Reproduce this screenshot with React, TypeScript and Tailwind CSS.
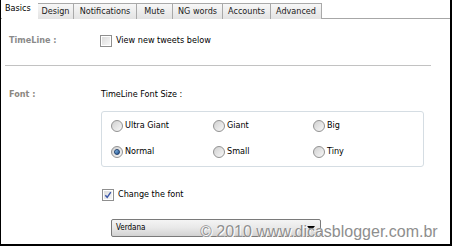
import React from "react";

const font = { fontFamily: '"DejaVu Sans Condensed", "Liberation Sans", Arial, sans-serif' };

function Tab({ label, active, w }: { label: string; active?: boolean; w: string }) {
  if (active) {
    return (
      <div className={`${w} h-[19px] bg-white relative z-10 flex items-start pl-[3px] pt-[2px] text-[9px] text-black`}>
        {label}
      </div>
    );
  }
  return (
    <div
      className={`${w} h-[16px] mt-[3px] border border-[#a9a9a9] border-b-0 bg-gradient-to-b from-[#f7f7f7] to-[#e3e3e3] flex items-center justify-center text-[9px] text-[#1a1a1a] -ml-px first:ml-0`}
    >
      {label}
    </div>
  );
}

function Checkbox({ checked }: { checked?: boolean }) {
  return (
    <div className="w-[12px] h-[12px] border border-[#8f8f8f] bg-white p-[1px] shrink-0">
      <div className="w-full h-full bg-gradient-to-br from-[#dcdcdc] to-[#f6f6f6] relative">
        {checked && (
          <svg viewBox="0 0 8 8" className="absolute inset-0 w-full h-full">
            <path d="M1.3 4.2 L3.2 6.3 L6.8 1.2" fill="none" stroke="#3b56a8" strokeWidth="1.4" />
          </svg>
        )}
      </div>
    </div>
  );
}

function Radio({ checked, label }: { checked?: boolean; label: string }) {
  return (
    <div className="flex items-center gap-[2px] text-[9px] text-black h-[12px]">
      <div className="w-[12px] h-[12px] rounded-full border border-[#929292] bg-gradient-to-br from-[#d0d0d0] to-[#f8f8f8] flex items-center justify-center shrink-0">
        {checked && (
          <div className="w-[6px] h-[6px] rounded-full bg-gradient-to-br from-[#8fc3ef] to-[#1f4f8a] border border-[#1d3f6e]" />
        )}
      </div>
      <span>{label}</span>
    </div>
  );
}

export default function App() {
  return (
    <div
      className="w-[452px] h-[246px] bg-white relative border-l border-r-2 border-b-2 border-black overflow-hidden"
      style={font}
    >
      {/* tab strip */}
      <div className="flex h-[19px] border-b border-[#a7a7a7] pl-px">
        <Tab label="Basics" active w="w-[36px]" />
        <Tab label="Design" w="w-[37px]" />
        <Tab label="Notifications" w="w-[64px]" />
        <Tab label="Mute" w="w-[37px]" />
        <Tab label="NG words" w="w-[51px]" />
        <Tab label="Accounts" w="w-[49px]" />
        <Tab label="Advanced" w="w-[52px]" />
      </div>

      {/* TimeLine row */}
      <div className="flex items-center mt-[16px] h-[12px]">
        <div className="w-[99px] pl-[8px] text-[9px] font-bold text-[#8a8a8a]">TimeLine :</div>
        <Checkbox />
        <span className="ml-[4px] text-[9px] text-black">View new tweets below</span>
      </div>

      {/* separator */}
      <div className="ml-[4px] mt-[18px] w-[426px] h-px bg-[#c2c2c2]" />

      {/* Font row */}
      <div className="flex items-center mt-[23px] h-[12px]">
        <div className="w-[100px] pl-[8px] text-[9px] font-bold text-[#8c8780]">Font :</div>
        <span className="text-[9px] text-black">TimeLine Font Size :</span>
      </div>

      {/* group box */}
      <div className="ml-[100px] mt-[10px] w-[323px] h-[56px] border border-[#d5dde3] rounded-[3px] grid grid-cols-[102px_100px_1fr] grid-rows-[12px_12px] gap-y-[14px] pl-[9px] pt-[8px]">
        <Radio label="Ultra Giant" />
        <Radio label="Giant" />
        <Radio label="Big" />
        <Radio label="Normal" checked />
        <Radio label="Small" />
        <Radio label="Tiny" />
      </div>

      {/* change the font */}
      <div className="flex items-center ml-[101px] mt-[22px] h-[12px]">
        <Checkbox checked />
        <span className="ml-[4px] text-[9px] text-black">Change the font</span>
      </div>

      {/* dropdown */}
      <div className="ml-[110px] mt-[18px] w-[210px] h-[18px] border border-[#7a7a7a] rounded-[2px] bg-gradient-to-b from-[#f4f4f4] via-[#e8e8e8] to-[#d2d2d2] flex items-center justify-between pl-[4px] pr-[5px]">
        <span className="text-[8px] text-black">Verdana</span>
        <svg width="8" height="5" viewBox="0 0 8 5">
          <path d="M0 0 H8 L4 5 Z" fill="#000" />
        </svg>
      </div>

      {/* watermark */}
      <div
        className="absolute left-[199px] top-[224px] text-[16px] text-[#8e8e8e] whitespace-nowrap leading-none"
        style={{ textShadow: "0 0 1px #fff, 1px 1px 0 #fff", fontFamily: '"Liberation Sans", Arial, sans-serif' }}
      >
        © 2010 www.dicasblogger.com.br
      </div>
    </div>
  );
}
